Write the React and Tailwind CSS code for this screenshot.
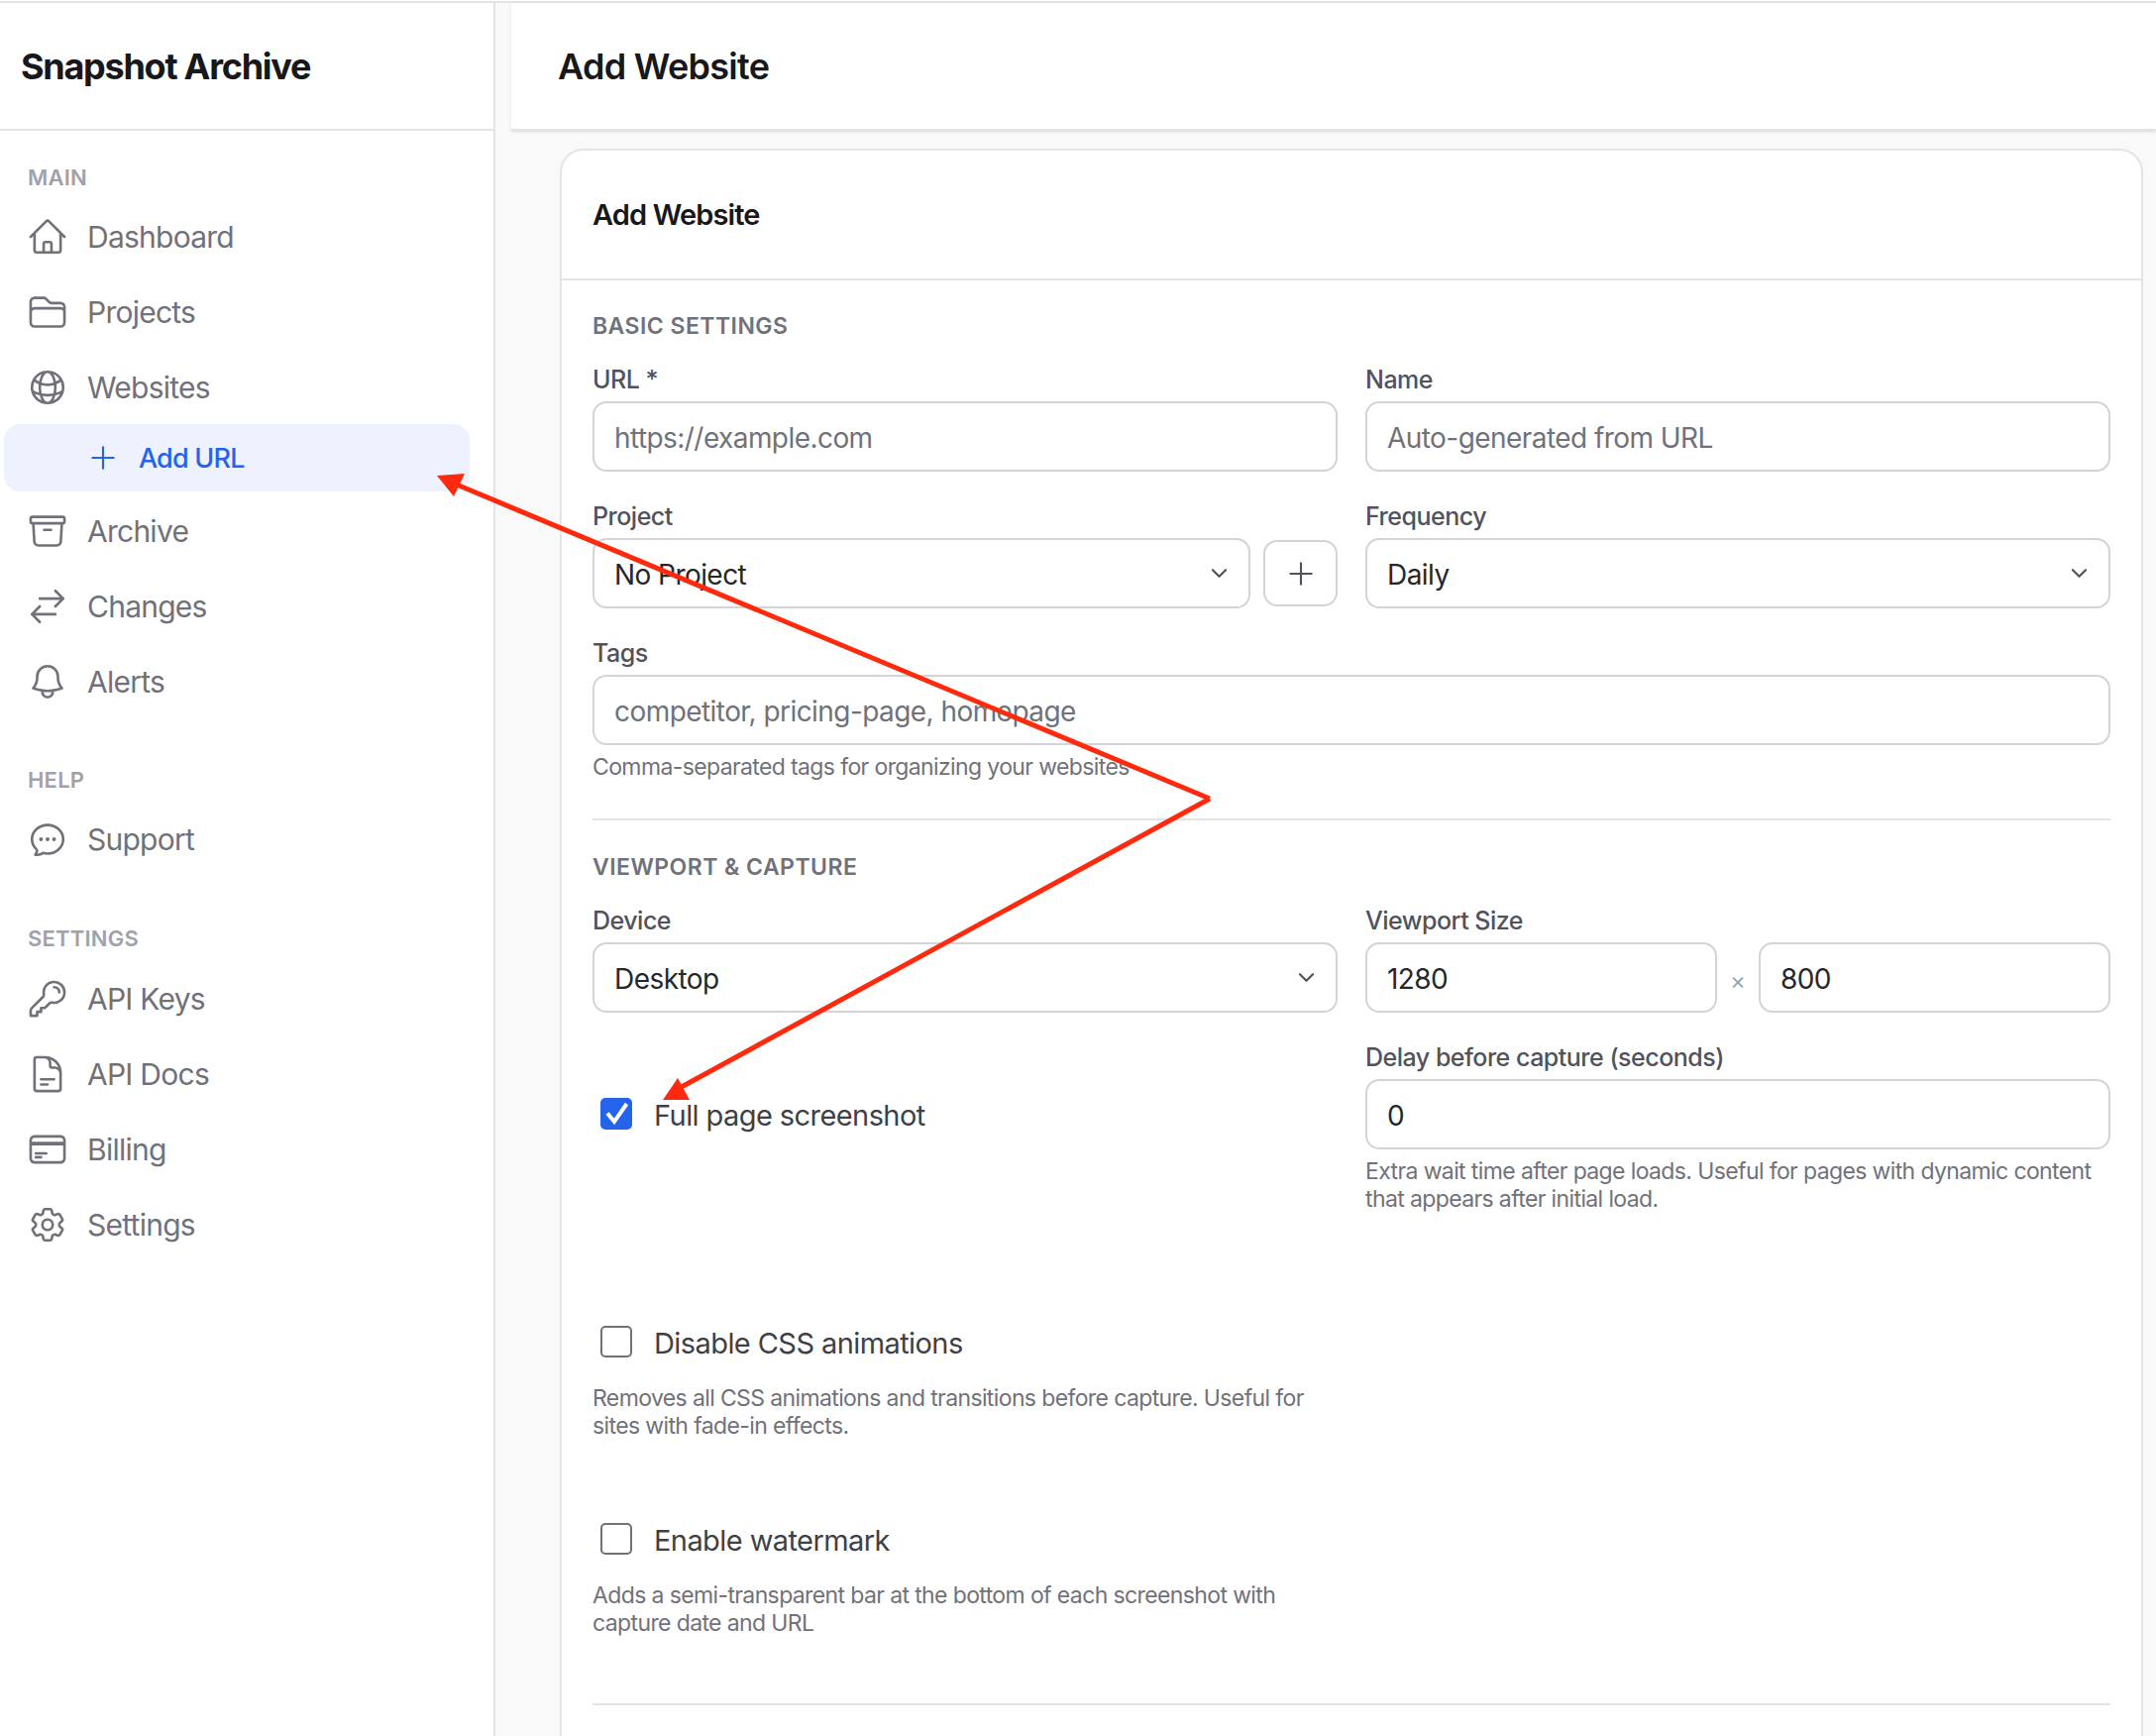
import {
  HiOutlineArchiveBox,
  HiOutlineArrowsRightLeft,
  HiOutlineBell,
  HiOutlineChatBubbleOvalLeftEllipsis,
  HiOutlineChevronDown,
  HiOutlineCog6Tooth,
  HiOutlineCreditCard,
  HiOutlineDocumentText,
  HiOutlineFolder,
  HiOutlineGlobeAlt,
  HiOutlineHome,
  HiOutlineKey,
  HiOutlinePlus,
} from "react-icons/hi2";

const NavItem = ({ icon: Icon, label, className = "" }) => {
    return (
        <a className={`flex h-[68px] items-center pl-[27px] text-[#71717a] ${className}`}>
            <Icon className="h-[42px] w-[42px] shrink-0" />
            <span className="ml-[19px] text-[30px] tracking-[-0.025em]">{label}</span>
        </a>
    );
};

const SectionTitle = ({ children, className = "" }) => {
    return <div className={`pl-[28px] text-[22px] leading-[30px] font-semibold tracking-[0.01em] text-[#a1a1aa] ${className}`}>{children}</div>;
};

const FormHeading = ({ children }) => {
    return <h3 className="mb-[24px] text-[23px] leading-[30px] font-semibold tracking-[0.02em] text-[#71717a]">{children}</h3>;
};

const Field = ({ label, children, className = "" }) => {
    return (
        <div className={className}>
            <label className="mb-[7px] block text-[25px] leading-[30px] font-medium tracking-[-0.02em] text-[#52525b]">{label}</label>
            {children}
        </div>
    );
};

const inputClass =
    "h-[71px] w-full rounded-[14px] border-2 border-[#d4d4d8] bg-white px-[20px] pt-[2px] text-[28px] tracking-[-0.02em] text-[#27272a] outline-none placeholder:text-[#71717a]";

const Select = ({ value, className = "" }) => {
    return (
        <div className={`relative ${className}`}>
            <select defaultValue={value} className={`${inputClass} appearance-none`}>
                <option>{value}</option>
            </select>
            <HiOutlineChevronDown strokeWidth={2.5} className="absolute top-[25px] right-[21px] h-[21px] w-[21px] text-[#52525b]" />
        </div>
    );
};

const Help = ({ children, className = "" }) => {
    return <p className={`text-[23px] leading-[28px] tracking-[-0.027em] text-[#71717a] ${className}`}>{children}</p>;
};

const Check = ({ label, checked }) => {
    return (
        <div className="flex h-[32px] items-center pl-[8px]">
            {checked ? (
                <span className="h-[32px] w-[32px] rounded-[5px] bg-[#2563eb]">
                    <svg width="32" height="32" viewBox="0 0 32 32" fill="none">
                        <path d="M7 15.5 L14 24 L26.500 6" stroke="#fff" strokeWidth="4" />
                    </svg>
                </span>
            ) : (
                <span className="h-[32px] w-[32px] rounded-[5px] border-2 border-[#71717a] bg-white"></span>
            )}
            <span className="mt-[3px] ml-[22px] text-[29px] tracking-[-0.02em] whitespace-nowrap text-[#3f3f46]">{label}</span>
        </div>
    );
};

const Arrows = () => {
    return (
        <svg className="pointer-events-none absolute top-0 left-0" width="2176" height="1752" viewBox="0 0 2176 1752">
            <path d="M1221 806 L456 487" stroke="#ff2a0d" strokeWidth="5" fill="none" />
            <path d="M441 480 L469 478 L458 501 Z" fill="#ff2a0d" />
            <path d="M1221 806 L684 1099" stroke="#ff2a0d" strokeWidth="5" fill="none" />
            <path d="M669 1110 L684 1088 L696 1110 Z" fill="#ff2a0d" />
        </svg>
    );
};

const App = () => {
    return (
        <div className="relative h-[1752px] w-[2176px] overflow-hidden bg-white pt-px font-['Inter',sans-serif]">
            <div className="flex h-full border-t-2 border-[#e4e4e7]">
                <aside className="h-full w-[500px] shrink-0 border-r-2 border-[#e4e4e7] bg-white">
                    <div className="flex h-[129px] items-center border-b-2 border-[#e4e4e7] pl-[21px]">
                        <h1 className="text-[36px] font-bold tracking-[-0.035em] text-[#18181b]">Snapshot Archive</h1>
                    </div>
                    <SectionTitle className="mt-[32px]">MAIN</SectionTitle>
                    <nav className="mt-[11px]">
                        <NavItem icon={HiOutlineHome} label="Dashboard" />
                        <NavItem icon={HiOutlineFolder} label="Projects" className="mt-[8px]" />
                        <NavItem icon={HiOutlineGlobeAlt} label="Websites" className="mt-[8px]" />
                        <a className="mt-[3px] ml-[4px] flex h-[68px] w-[470px] items-center rounded-[16px] bg-[#eef2fe] pl-[83px] text-[#2563eb]">
                            <HiOutlinePlus className="h-[34px] w-[34px] shrink-0" />
                            <span className="mt-[2px] ml-[19px] text-[27px] font-medium tracking-[-0.03em]">Add URL</span>
                        </a>
                        <NavItem icon={HiOutlineArchiveBox} label="Archive" className="mt-[6px]" />
                        <NavItem icon={HiOutlineArrowsRightLeft} label="Changes" className="mt-[8px]" />
                        <NavItem icon={HiOutlineBell} label="Alerts" className="mt-[8px]" />
                    </nav>
                    <SectionTitle className="mt-[50px]">HELP</SectionTitle>
                    <nav className="mt-[11px]">
                        <NavItem icon={HiOutlineChatBubbleOvalLeftEllipsis} label="Support" />
                    </nav>
                    <SectionTitle className="mt-[51px]">SETTINGS</SectionTitle>
                    <nav className="mt-[12px]">
                        <NavItem icon={HiOutlineKey} label="API Keys" />
                        <NavItem icon={HiOutlineDocumentText} label="API Docs" className="mt-[8px]" />
                        <NavItem icon={HiOutlineCreditCard} label="Billing" className="mt-[8px]" />
                        <NavItem icon={HiOutlineCog6Tooth} label="Settings" className="mt-[8px]" />
                    </nav>
                </aside>

                <main className="min-w-0 flex-1 bg-[#f9f9fa] pl-[16px]">
                    <header className="flex h-[129px] items-center border-b-2 border-[#e4e4e7] bg-white pl-[47px] shadow-sm">
                        <h2 className="text-[36px] font-semibold tracking-[-0.02em] text-[#18181b]">Add Website</h2>
                    </header>

                    <section className="mt-[18px] mr-[13px] ml-[49px] rounded-[24px] border-2 border-[#e4e4e7] bg-white pb-[60px]">
                        <div className="flex h-[131px] items-center border-b-2 border-[#e4e4e7] pl-[31px]">
                            <h3 className="text-[29px] font-semibold tracking-[-0.03em] text-[#18181b]">Add Website</h3>
                        </div>
                        <div className="px-[31px] pt-[31px]">
                            <FormHeading>BASIC SETTINGS</FormHeading>
                            <div className="grid grid-cols-2 gap-x-[28px] gap-y-[30px]">
                                <Field label="URL *">
                                    <input className={inputClass} placeholder="https://example.com" />
                                </Field>
                                <Field label="Name">
                                    <input className={inputClass} placeholder="Auto-generated from URL" />
                                </Field>
                                <Field label="Project">
                                    <div className="flex items-center gap-[13px]">
                                        <Select value="No Project" className="flex-1" />
                                        <button className="flex h-[67px] w-[75px] items-center justify-center rounded-[14px] border-2 border-[#d4d4d8] text-[#52525b]">
                                            <HiOutlinePlus className="h-[34px] w-[34px]" />
                                        </button>
                                    </div>
                                </Field>
                                <Field label="Frequency">
                                    <Select value="Daily" />
                                </Field>
                                <Field label="Tags" className="col-span-2">
                                    <input className={inputClass} placeholder="competitor, pricing-page, homepage" />
                                    <Help className="mt-[8px]">Comma-separated tags for organizing your websites</Help>
                                </Field>
                            </div>

                            <hr className="mt-[38px] mb-[32px] border-t-2 border-[#e4e4e7]" />

                            <FormHeading>VIEWPORT &amp; CAPTURE</FormHeading>
                            <div className="grid grid-cols-2 gap-x-[28px] gap-y-[30px]">
                                <Field label="Device">
                                    <Select value="Desktop" />
                                </Field>
                                <Field label="Viewport Size">
                                    <div className="flex items-center">
                                        <input className={inputClass} defaultValue="1280" />
                                        <span className="mt-[6px] w-[42px] shrink-0 text-center text-[24px] text-[#a1a1aa]">×</span>
                                        <input className={inputClass} defaultValue="800" />
                                    </div>
                                </Field>
                                <div className="pt-[56px]">
                                    <Check label="Full page screenshot" checked />
                                </div>
                                <Field label="Delay before capture (seconds)">
                                    <input className={inputClass} defaultValue="0" />
                                    <Help className="mt-[8px]">
                                        Extra wait time after page loads. Useful for pages with dynamic content that appears after initial load.
                                    </Help>
                                </Field>
                            </div>

                            <div className="mt-[114px] w-[752px]">
                                <Check label="Disable CSS animations" />
                                <Help className="mt-[27px]">
                                    Removes all CSS animations and transitions before capture. Useful for sites with fade-in effects.
                                </Help>
                            </div>
                            <div className="mt-[84px] w-[752px]">
                                <Check label="Enable watermark" />
                                <Help className="mt-[27px]">
                                    Adds a semi-transparent bar at the bottom of each screenshot with capture date and URL
                                </Help>
                            </div>

                            <hr className="mt-[67px] border-t-2 border-[#e4e4e7]" />
                        </div>
                    </section>
                </main>
            </div>
            <Arrows />
        </div>
    );
};

export default App;
